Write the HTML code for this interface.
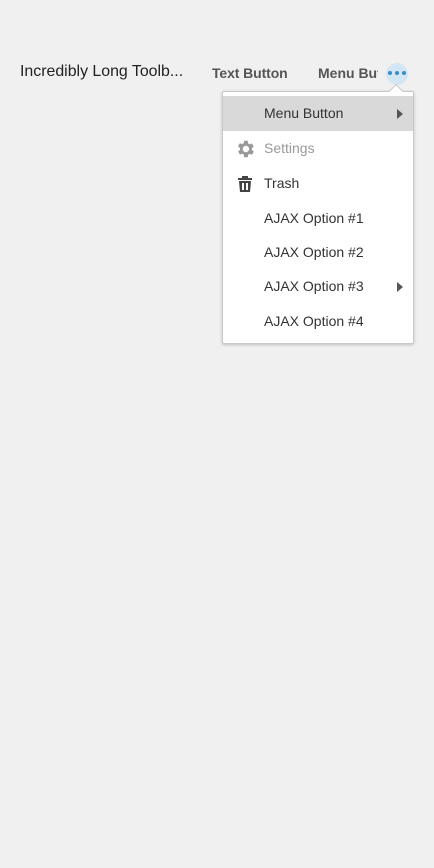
<!DOCTYPE html><html><head><style>
body{margin:0;width:434px;height:868px;background:#f0f0f0;font-family:"Liberation Sans",sans-serif;position:relative;overflow:hidden}
.t{position:absolute;white-space:nowrap}
.menu{position:absolute;left:222px;top:91px;width:190px;height:251px;background:#fff;border:1px solid #c8c8c8;box-shadow:0 1px 3px rgba(0,0,0,.2);border-radius:2px}
.it{position:absolute;left:0;width:190px;height:35px;font-size:14px;color:#333;line-height:35px}
.it span{position:absolute;left:41px}
.arr{position:absolute;left:174px;top:13px;width:0;height:0;border-left:6px solid #555;border-top:5px solid transparent;border-bottom:5px solid transparent}
</style></head><body>
<div class="t" style="left:20px;top:63px;font-size:15.9px;color:#222">Incredibly Long Toolb...</div>
<div class="t" style="left:212px;top:65px;font-size:14px;font-weight:bold;color:#555;letter-spacing:-0.1px">Text Button</div>
<div class="t" style="left:318px;top:65px;font-size:14px;font-weight:bold;color:#555;width:60px;overflow:hidden">Menu Button</div>
<div style="position:absolute;left:386px;top:63px;width:22px;height:22px;border-radius:50%;background:#d3e6f3"></div>
<div style="position:absolute;left:388px;top:71px;width:4px;height:4px;border-radius:50%;background:#3a8cc9;box-shadow:7px 0 #3a8cc9,14px 0 #3a8cc9"></div>
<div class="menu">
<div style="position:absolute;left:168px;top:-6px;width:9px;height:9px;background:#fff;border-left:1px solid #c8c8c8;border-top:1px solid #c8c8c8;transform:rotate(45deg)"></div>
<div class="it" style="top:4px;background:#d9d9d9"><span>Menu Button</span><div class="arr"></div></div>
<div class="it" style="top:39px;color:#999"><svg style="position:absolute;left:11px;top:7px" width="22" height="22" viewBox="0 0 24 24"><path fill="#999" d="M19.4 13a7.5 7.5 0 0 0 0-2l2.1-1.6-2-3.5-2.5 1a7 7 0 0 0-1.7-1L15 3h-4l-.4 2.7a7 7 0 0 0-1.7 1l-2.5-1-2 3.5L6.6 11a7.5 7.5 0 0 0 0 2l-2.1 1.6 2 3.5 2.5-1a7 7 0 0 0 1.7 1L11 21h4l.4-2.7a7 7 0 0 0 1.7-1l2.5 1 2-3.5zM13 15.5a3.5 3.5 0 1 1 0-7 3.5 3.5 0 0 1 0 7z"/></svg><span>Settings</span></div>
<div class="it" style="top:74px"><svg style="position:absolute;left:15px;top:10px" width="14" height="16" viewBox="0 0 14 16"><path fill="#444" d="M0 2h4V0h6v2h4v2H0zM1 5h12l-1 11H2zM4 7v7h2V7zm4 0v7h2V7z"/></svg><span>Trash</span></div>
<div class="it" style="top:109px"><span>AJAX Option #1</span></div>
<div class="it" style="top:143px"><span>AJAX Option #2</span></div>
<div class="it" style="top:177px"><span>AJAX Option #3</span><div class="arr"></div></div>
<div class="it" style="top:212px"><span>AJAX Option #4</span></div>
</div>
</body></html>
